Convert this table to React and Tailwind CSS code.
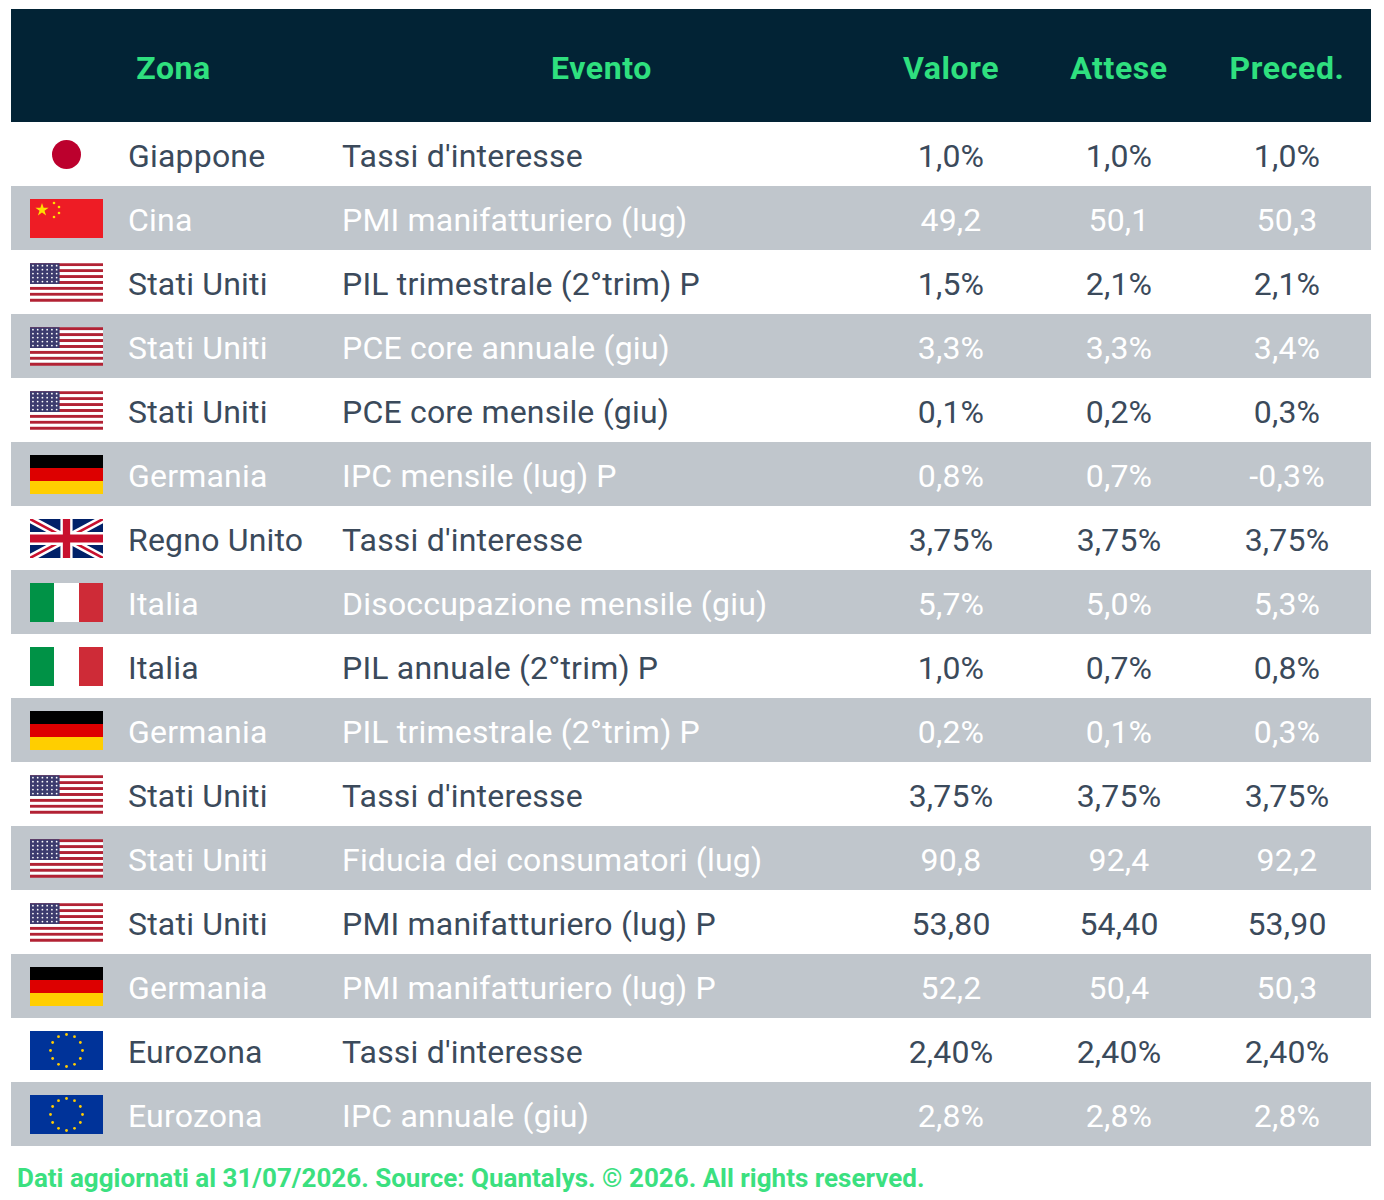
import React from "react";

const UsFlag = () => (
  <svg viewBox="0 0 74 39" className="w-[73px] h-[39px]">
    {Array.from({ length: 13 }).map((_, i) => (
      <rect key={i} x="0" y={i * 3} width="74" height="3" fill={i % 2 === 0 ? "#b22234" : "#ffffff"} />
    ))}
    <rect x="0" y="0" width="30" height="21" fill="#3c3b6e" />
    {Array.from({ length: 5 }).map((_, r) =>
      Array.from({ length: 6 }).map((_, c) => (
        <circle key={`${r}-${c}`} cx={3 + c * 4.8} cy={2.5 + r * 4} r="0.9" fill="#ffffff" />
      ))
    )}
  </svg>
);

const CnFlag = () => (
  <svg viewBox="0 0 73 39" className="w-[73px] h-[39px]">
    <rect width="73" height="39" fill="#ee1c25" />
    <polygon points="12,4 13.6,8.8 18.6,8.8 14.5,11.8 16.1,16.6 12,13.6 7.9,16.6 9.5,11.8 5.4,8.8 10.4,8.8" fill="#ffde00" />
    <circle cx="24" cy="4" r="1.3" fill="#ffde00" />
    <circle cx="29" cy="8" r="1.3" fill="#ffde00" />
    <circle cx="29" cy="14" r="1.3" fill="#ffde00" />
    <circle cx="24" cy="18" r="1.3" fill="#ffde00" />
  </svg>
);

const DeFlag = () => (
  <div className="w-[73px] h-[39px] flex flex-col">
    <div className="flex-1 bg-black" />
    <div className="flex-1 bg-[#dd0000]" />
    <div className="flex-1 bg-[#ffce00]" />
  </div>
);

const ItFlag = () => (
  <div className="w-[73px] h-[39px] flex">
    <div className="flex-1 bg-[#009246]" />
    <div className="flex-1 bg-white" />
    <div className="flex-1 bg-[#ce2b37]" />
  </div>
);

const UkFlag = () => (
  <svg viewBox="0 0 60 30" className="w-[73px] h-[39px]" preserveAspectRatio="none">
    <rect width="60" height="30" fill="#012169" />
    <path d="M0,0 L60,30 M60,0 L0,30" stroke="#ffffff" strokeWidth="6" />
    <path d="M0,0 L60,30 M60,0 L0,30" stroke="#c8102e" strokeWidth="2" />
    <path d="M30,0 V30 M0,15 H60" stroke="#ffffff" strokeWidth="10" />
    <path d="M30,0 V30 M0,15 H60" stroke="#c8102e" strokeWidth="6" />
  </svg>
);

const EuFlag = () => (
  <svg viewBox="0 0 73 39" className="w-[73px] h-[39px]">
    <rect width="73" height="39" fill="#003399" />
    {Array.from({ length: 12 }).map((_, i) => {
      const a = (i * Math.PI) / 6;
      return <circle key={i} cx={36.5 + 16 * Math.sin(a)} cy={19.5 - 16 * Math.cos(a)} r="1.4" fill="#ffcc00" />;
    })}
  </svg>
);

const JpFlag = () => (
  <div className="w-[73px] h-[39px] flex items-center justify-center">
    <div className="w-[29px] h-[29px] rounded-full bg-[#bc002d]" />
  </div>
);

const flags = { jp: JpFlag, cn: CnFlag, us: UsFlag, de: DeFlag, uk: UkFlag, it: ItFlag, eu: EuFlag };

const rows = [
  ["jp", "Giappone", "Tassi d'interesse", "1,0%", "1,0%", "1,0%"],
  ["cn", "Cina", "PMI manifatturiero (lug)", "49,2", "50,1", "50,3"],
  ["us", "Stati Uniti", "PIL trimestrale (2°trim) P", "1,5%", "2,1%", "2,1%"],
  ["us", "Stati Uniti", "PCE core annuale (giu)", "3,3%", "3,3%", "3,4%"],
  ["us", "Stati Uniti", "PCE core mensile (giu)", "0,1%", "0,2%", "0,3%"],
  ["de", "Germania", "IPC mensile (lug) P", "0,8%", "0,7%", "-0,3%"],
  ["uk", "Regno Unito", "Tassi d'interesse", "3,75%", "3,75%", "3,75%"],
  ["it", "Italia", "Disoccupazione mensile (giu)", "5,7%", "5,0%", "5,3%"],
  ["it", "Italia", "PIL annuale (2°trim) P", "1,0%", "0,7%", "0,8%"],
  ["de", "Germania", "PIL trimestrale (2°trim) P", "0,2%", "0,1%", "0,3%"],
  ["us", "Stati Uniti", "Tassi d'interesse", "3,75%", "3,75%", "3,75%"],
  ["us", "Stati Uniti", "Fiducia dei consumatori (lug)", "90,8", "92,4", "92,2"],
  ["us", "Stati Uniti", "PMI manifatturiero (lug) P", "53,80", "54,40", "53,90"],
  ["de", "Germania", "PMI manifatturiero (lug) P", "52,2", "50,4", "50,3"],
  ["eu", "Eurozona", "Tassi d'interesse", "2,40%", "2,40%", "2,40%"],
  ["eu", "Eurozona", "IPC annuale (giu)", "2,8%", "2,8%", "2,8%"],
];

export default function App() {
  return (
    <div className="bg-white w-[1384px] h-[1200px] pt-[9px] px-[11px] font-['Roboto',sans-serif]">
      <div className="w-[1360px]">
        <div className="grid grid-cols-[325px_531px_168px_168px_168px] h-[113px] bg-[#022335] items-center pt-[5px] text-[#2fe07f] text-[32px] font-bold tracking-[0.6px]">
          <div className="text-center">Zona</div>
          <div className="text-center">Evento</div>
          <div className="text-center">Valore</div>
          <div className="text-center">Attese</div>
          <div className="text-center">Preced.</div>
        </div>
        {rows.map((r, i) => {
          const Flag = flags[r[0]];
          const alt = i % 2 === 1;
          return (
            <div
              key={i}
              className={`grid grid-cols-[111px_214px_531px_168px_168px_168px] h-[64px] items-center text-[32px] tracking-[0.2px] ${
                alt ? "bg-[#c0c6cc] text-white" : "bg-white text-[#3b4a5b]"
              }`}
            >
              <div className="flex justify-center">
                <Flag />
              </div>
              <div className="pl-[6px] pt-[3px] whitespace-nowrap">{r[1]}</div>
              <div className="pl-[6px] pt-[3px] whitespace-nowrap">{r[2]}</div>
              <div className="pt-[3px] text-center">{r[3]}</div>
              <div className="pt-[3px] text-center">{r[4]}</div>
              <div className="pt-[3px] text-center">{r[5]}</div>
            </div>
          );
        })}
        <p className="mt-[13px] pl-[6px] text-[26px] font-bold text-[#3be07f] whitespace-nowrap">
          Dati aggiornati al 31/07/2026. Source: Quantalys. © 2026. All rights reserved.
        </p>
      </div>
    </div>
  );
}
